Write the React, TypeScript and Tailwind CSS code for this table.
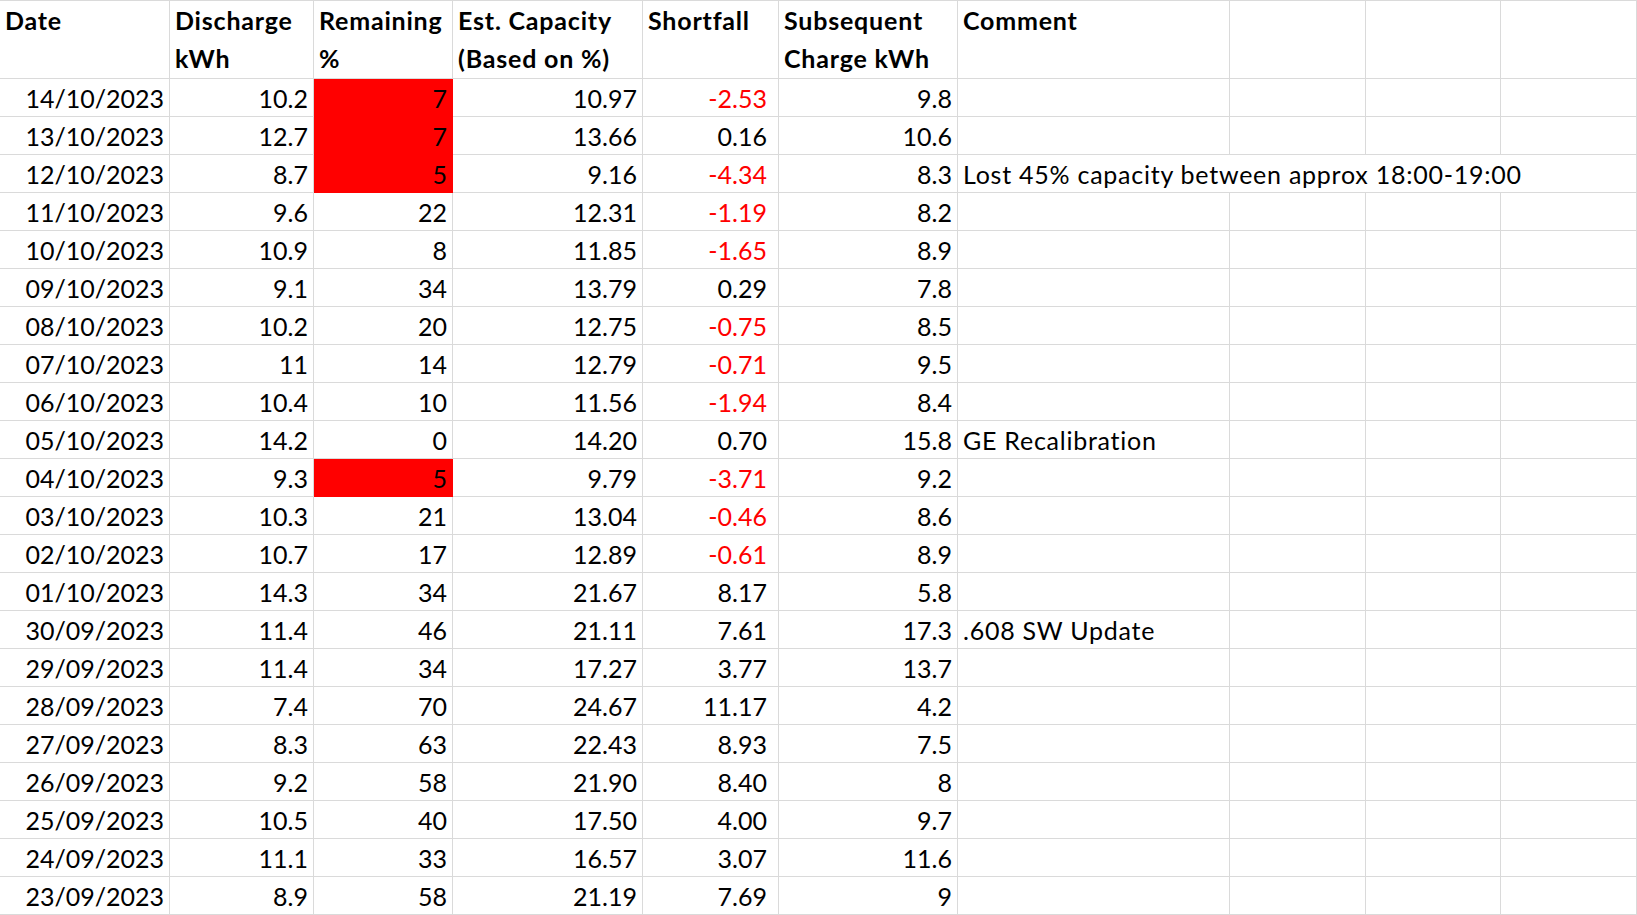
type Row = {
  date: string;
  discharge: string;
  remaining: string;
  est: string;
  shortfall: string;
  charge: string;
  comment?: string;
  flag?: boolean;
};

const rows: Row[] = [
  { date: "14/10/2023", discharge: "10.2", remaining: "7", est: "10.97", shortfall: "-2.53", charge: "9.8", flag: true },
  { date: "13/10/2023", discharge: "12.7", remaining: "7", est: "13.66", shortfall: "0.16", charge: "10.6", flag: true },
  { date: "12/10/2023", discharge: "8.7", remaining: "5", est: "9.16", shortfall: "-4.34", charge: "8.3", flag: true, comment: "Lost 45% capacity between approx 18:00-19:00" },
  { date: "11/10/2023", discharge: "9.6", remaining: "22", est: "12.31", shortfall: "-1.19", charge: "8.2" },
  { date: "10/10/2023", discharge: "10.9", remaining: "8", est: "11.85", shortfall: "-1.65", charge: "8.9" },
  { date: "09/10/2023", discharge: "9.1", remaining: "34", est: "13.79", shortfall: "0.29", charge: "7.8" },
  { date: "08/10/2023", discharge: "10.2", remaining: "20", est: "12.75", shortfall: "-0.75", charge: "8.5" },
  { date: "07/10/2023", discharge: "11", remaining: "14", est: "12.79", shortfall: "-0.71", charge: "9.5" },
  { date: "06/10/2023", discharge: "10.4", remaining: "10", est: "11.56", shortfall: "-1.94", charge: "8.4" },
  { date: "05/10/2023", discharge: "14.2", remaining: "0", est: "14.20", shortfall: "0.70", charge: "15.8", comment: "GE Recalibration" },
  { date: "04/10/2023", discharge: "9.3", remaining: "5", est: "9.79", shortfall: "-3.71", charge: "9.2", flag: true },
  { date: "03/10/2023", discharge: "10.3", remaining: "21", est: "13.04", shortfall: "-0.46", charge: "8.6" },
  { date: "02/10/2023", discharge: "10.7", remaining: "17", est: "12.89", shortfall: "-0.61", charge: "8.9" },
  { date: "01/10/2023", discharge: "14.3", remaining: "34", est: "21.67", shortfall: "8.17", charge: "5.8" },
  { date: "30/09/2023", discharge: "11.4", remaining: "46", est: "21.11", shortfall: "7.61", charge: "17.3", comment: ".608 SW Update" },
  { date: "29/09/2023", discharge: "11.4", remaining: "34", est: "17.27", shortfall: "3.77", charge: "13.7" },
  { date: "28/09/2023", discharge: "7.4", remaining: "70", est: "24.67", shortfall: "11.17", charge: "4.2" },
  { date: "27/09/2023", discharge: "8.3", remaining: "63", est: "22.43", shortfall: "8.93", charge: "7.5" },
  { date: "26/09/2023", discharge: "9.2", remaining: "58", est: "21.90", shortfall: "8.40", charge: "8" },
  { date: "25/09/2023", discharge: "10.5", remaining: "40", est: "17.50", shortfall: "4.00", charge: "9.7" },
  { date: "24/09/2023", discharge: "11.1", remaining: "33", est: "16.57", shortfall: "3.07", charge: "11.6" },
  { date: "23/09/2023", discharge: "8.9", remaining: "58", est: "21.19", shortfall: "7.69", charge: "9" },
];

const headers = [
  ["Date"],
  ["Discharge", "kWh"],
  ["Remaining", "%"],
  ["Est. Capacity", "(Based on %)"],
  ["Shortfall"],
  ["Subsequent", "Charge kWh"],
  ["Comment"],
  [],
  [],
  [],
];

const cell = "h-[38px] border-r border-b border-[#dadada] flex items-end pb-[3px] leading-[30px] whitespace-nowrap";

function Num({ value, red, wide }: { value: string; red?: boolean; wide?: boolean }) {
  return (
    <div
      className={
        cell +
        (wide ? " justify-end pr-[11px]" : " justify-end pr-[5px]") +
        (red ? " text-[#ff0000]" : "")
      }
    >
      {value}
    </div>
  );
}

export default function App() {
  return (
    <div
      className="w-[1637px] h-[915px] bg-white text-black overflow-hidden text-[25px]"
      style={{ fontFamily: "Lato, 'Open Sans', sans-serif" }}
    >
      <div className="grid grid-cols-[170px_144px_139px_190px_136px_179px_272px_136px_135px_136px]">
        {headers.map((lines, i) => (
          <div
            key={i}
            className="h-[79px] border-t border-r border-b border-[#dadada] pl-[5px] font-bold tracking-[0.8px] leading-[38px] flex flex-col whitespace-nowrap"
          >
            {lines.map((l) => (
              <span key={l}>{l}</span>
            ))}
          </div>
        ))}

        {rows.map((r) => (
          <div key={r.date} className="contents">
            <Num value={r.date} />
            <Num value={r.discharge} />
            {r.flag ? (
              <div className="h-[38px] border-r border-b border-[#ff0000] bg-[#ff0000] flex items-end justify-end pb-[3px] pr-[5px] leading-[30px]">
                {r.remaining}
              </div>
            ) : (
              <Num value={r.remaining} />
            )}
            <Num value={r.est} />
            <Num value={r.shortfall} red={r.shortfall.startsWith("-")} wide />
            <Num value={r.charge} />
            {r.comment && r.comment.length > 30 ? (
              <div className={cell + " col-span-4 pl-[5px] tracking-[0.75px]"}>{r.comment}</div>
            ) : (
              <>
                <div className={cell + " pl-[5px] tracking-[0.75px]"}>{r.comment}</div>
                <div className={cell} />
                <div className={cell} />
                <div className={cell} />
              </>
            )}
          </div>
        ))}
      </div>
    </div>
  );
}
